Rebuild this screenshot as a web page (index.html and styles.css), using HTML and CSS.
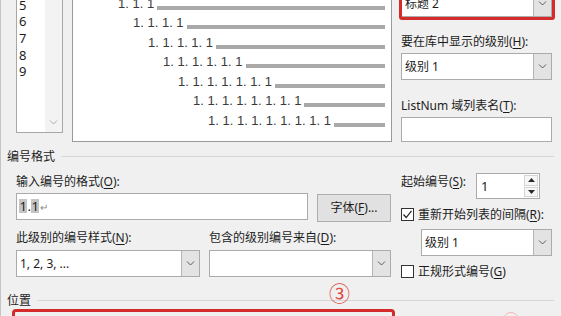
FILE: index.html
```html
<!DOCTYPE html>
<html lang="zh-CN">
<head>
    <meta charset="UTF-8">
    <meta name="viewport" content="width=device-width, initial-scale=1.0">
    <title>定义新多级列表</title>
    <link rel="stylesheet" href="styles.css">
</head>
<body>
    <div class="dialog">
        <div class="top">
            <div class="levels">
                <ul class="level-list">
                    <li>1</li>
                    <li>2</li>
                    <li>3</li>
                    <li>4</li>
                    <li>5</li>
                    <li>6</li>
                    <li>7</li>
                    <li>8</li>
                    <li>9</li>
                </ul>
                <div class="vscroll">
                    <svg class="chev light" width="9" height="5" viewBox="0 0 9 5"><polyline points="1,0.5 4.5,4 8,0.5"/></svg>
                </div>
            </div>

            <div class="preview">
                <div class="pv-row lv1"><span>1</span><i></i></div>
                <div class="pv-row lv2"><span>1. 1</span><i></i></div>
                <div class="pv-row lv3"><span>1. 1. 1</span><i></i></div>
                <div class="pv-row lv4"><span>1. 1. 1. 1</span><i></i></div>
                <div class="pv-row lv5"><span>1. 1. 1. 1. 1</span><i></i></div>
                <div class="pv-row lv6"><span>1. 1. 1. 1. 1. 1</span><i></i></div>
                <div class="pv-row lv7"><span>1. 1. 1. 1. 1. 1. 1</span><i></i></div>
                <div class="pv-row lv8"><span>1. 1. 1. 1. 1. 1. 1. 1</span><i></i></div>
                <div class="pv-row lv9"><span>1. 1. 1. 1. 1. 1. 1. 1. 1</span><i></i></div>
            </div>

            <div class="side">
                <div class="combo marked">
                    <span class="combo-text">标题 2</span>
                    <span class="drop"><svg class="chev" width="9" height="5" viewBox="0 0 9 5"><polyline points="1,0.5 4.5,4 8,0.5"/></svg></span>
                </div>
                <div class="label gap-lg">要在库中显示的级别(<u>H</u>):</div>
                <div class="combo gap-sm">
                    <span class="combo-text">级别 1</span>
                    <span class="drop"><svg class="chev" width="9" height="5" viewBox="0 0 9 5"><polyline points="1,0.5 4.5,4 8,0.5"/></svg></span>
                </div>
                <div class="label gap-lg2">ListNum 域列表名(<u>T</u>):</div>
                <div class="textbox list-name gap-sm"></div>
            </div>
        </div>

        <div class="group format-group">
            <div class="group-title">编号格式</div>
            <div class="group-body">
                <div class="format-left">
                    <div class="label first-label">输入编号的格式(<u>O</u>):</div>
                    <div class="format-row">
                        <div class="textbox format-input"><span class="field">1</span>.<span class="field">1</span><span class="para">↵</span></div>
                        <div class="btn">字体(<u>F</u>)...</div>
                    </div>
                    <div class="pair">
                        <div class="label">此级别的编号样式(<u>N</u>):</div>
                        <div class="label">包含的级别编号来自(<u>D</u>):</div>
                        <div class="combo">
                            <span class="combo-text">1, 2, 3, ...</span>
                            <span class="drop"><svg class="chev" width="9" height="5" viewBox="0 0 9 5"><polyline points="1,0.5 4.5,4 8,0.5"/></svg></span>
                        </div>
                        <div class="combo">
                            <span class="combo-text"></span>
                            <span class="drop"><svg class="chev" width="9" height="5" viewBox="0 0 9 5"><polyline points="1,0.5 4.5,4 8,0.5"/></svg></span>
                        </div>
                    </div>
                </div>

                <div class="format-right">
                    <div class="spin-row">
                        <span class="label">起始编号(<u>S</u>):</span>
                        <div class="spinbox">
                            <span class="spin-value">1</span>
                            <div class="spin-buttons">
                                <span class="spin-btn"><svg width="7" height="4" viewBox="0 0 7 4"><polygon points="0,4 3.5,0 7,4"/></svg></span>
                                <span class="spin-btn"><svg width="7" height="4" viewBox="0 0 7 4"><polygon points="0,0 3.5,4 7,0"/></svg></span>
                            </div>
                        </div>
                    </div>
                    <label class="check-row">
                        <span class="checkbox checked"><svg width="11" height="11" viewBox="0 0 11 11"><polyline points="1.5,5.5 4.2,8.5 9.5,1.8"/></svg></span>
                        重新开始列表的间隔(<u>R</u>):
                    </label>
                    <div class="combo restart-combo">
                        <span class="combo-text">级别 1</span>
                        <span class="drop"><svg class="chev" width="9" height="5" viewBox="0 0 9 5"><polyline points="1,0.5 4.5,4 8,0.5"/></svg></span>
                    </div>
                    <label class="check-row">
                        <span class="checkbox"></span>
                        正规形式编号(<u>G</u>)
                    </label>
                </div>
            </div>
        </div>

        <div class="group position-group">
            <div class="group-title">位置</div>
            <div class="marked-area"></div>
        </div>

        <span class="callout">③</span>
        <span class="callout-next"></span>
    </div>
</body>
</html>
```

FILE: styles.css
```css
/* dialog */
body {
    margin: 0;
    background-color: #f0f0f0;
    font-family: "Noto Sans", "Noto Sans CJK SC", sans-serif;
    font-size: 12px;
    color: #1c1c1c;
}

.dialog {
    position: relative;
    width: 561px;
    height: 316px;
    overflow: hidden;
    box-sizing: border-box;
    border-left: 1px solid #c4c4c4;
}

u {
    text-decoration-thickness: 1px;
    text-underline-offset: 2px;
}

.label {
    line-height: 16px;
    white-space: nowrap;
}

/* top part: levels, preview, link settings */
.top {
    display: flex;
    align-items: flex-start;
    margin-top: -80px;
}

.levels {
    display: flex;
    margin-left: 15px;
    margin-top: 9px;
    width: 47px;
    height: 204px;
    box-sizing: border-box;
    border: 1px solid #a8a8a8;
    background-color: #fff;
}

.level-list {
    flex: 1;
    list-style: none;
    margin: 0;
    padding: 0 0 0 2px;
    font-size: 13px;
    line-height: 16.67px;
}

.vscroll {
    width: 17px;
    background-color: #f3f3f3;
    display: flex;
    align-items: flex-end;
    justify-content: center;
    padding-bottom: 7px;
    box-sizing: border-box;
}

.chev {
    display: block;
}

.chev polyline {
    fill: none;
    stroke: #5a5a5a;
    stroke-width: 1;
}

.chev.light polyline {
    stroke: #a8a8a8;
}

.preview {
    margin-left: 9px;
    margin-top: 28px;
    width: 320px;
    height: 194px;
    box-sizing: border-box;
    border: 1px solid #9a9a9a;
    background-color: #fff;
    padding: 5.65px 6px 0 0;
}

.pv-row {
    display: flex;
    align-items: center;
    height: 19.5px;
    font-family: "Liberation Sans", Arial, sans-serif;
    font-size: 13px;
    color: #3a3a3a;
    white-space: pre;
}

.pv-row i {
    flex: 1;
    height: 4px;
    margin: 9px 0 0 3px;
    background-color: #a9a9a9;
}

.lv1 { padding-left: 15px; }
.lv2 { padding-left: 30px; }
.lv3 { padding-left: 45px; }
.lv4 { padding-left: 60px; }
.lv5 { padding-left: 75px; }
.lv6 { padding-left: 90px; }
.lv7 { padding-left: 105px; }
.lv8 { padding-left: 120px; }
.lv9 { padding-left: 135px; }

.side {
    margin-left: 9px;
    padding-top: 70px;
    width: 151px;
}

.gap-lg { margin-top: 17px; }
.gap-lg2 { margin-top: 18px; }
.gap-sm { margin-top: 3px; }

/* controls */
.combo {
    position: relative;
    display: flex;
    height: 27px;
    box-sizing: border-box;
    border: 1px solid #ababab;
    background-color: #fff;
}

.combo-text {
    flex: 1;
    padding-left: 3px;
    line-height: 25px;
    white-space: nowrap;
}

.drop {
    width: 17px;
    background-color: #e3e3e3;
    border-left: 1px solid #b4b4b4;
    display: flex;
    align-items: center;
    justify-content: center;
}

.marked::after {
    content: "";
    position: absolute;
    top: -4px;
    left: -3px;
    right: -4px;
    bottom: -4px;
    border: 3px solid #d42b2b;
    border-radius: 3px;
}

.textbox {
    box-sizing: border-box;
    border: 1px solid #ababab;
    background-color: #fff;
}

.list-name {
    height: 25px;
}

/* 编号格式 */
.group-title {
    display: flex;
    align-items: center;
    margin-left: 6px;
    line-height: 16px;
}

.group-title::after {
    content: "";
    flex: 1;
    margin: -1px 7px 0 6px;
    border-top: 1px solid #d6d6d6;
}

.format-group {
    margin-top: 7px;
}

.group-body {
    display: flex;
    padding-left: 15px;
}

.format-left {
    width: 375px;
}

.first-label {
    margin-top: 9px;
}

.format-row {
    display: flex;
    align-items: flex-start;
    margin-top: 3px;
}

.format-input {
    width: 292px;
    height: 27px;
    padding: 5px 0 0 2px;
    font-size: 13px;
    line-height: 14px;
}

.field {
    display: inline-block;
    background-color: #c4c4c4;
    padding: 0 0.5px;
}

.para {
    font-size: 10px;
    color: #8a8a8a;
    margin-left: 1px;
}

.btn {
    margin: 1px 0 0 9px;
    width: 74px;
    height: 28px;
    box-sizing: border-box;
    border: 1px solid #adadad;
    background-color: #e1e1e1;
    text-align: center;
    line-height: 26px;
}

.pair {
    display: grid;
    grid-template-columns: 184px 182px;
    column-gap: 9px;
    row-gap: 4px;
    margin-top: 8px;
}

.format-right {
    margin-left: 10px;
    width: 152px;
}

.spin-row {
    display: flex;
    align-items: flex-start;
    margin-top: 8px;
}

.spin-row .label {
    margin-top: 1px;
}

.spinbox {
    display: flex;
    margin-left: auto;
    margin-right: 13px;
    width: 64px;
    height: 26px;
    box-sizing: border-box;
    border: 1px solid #ababab;
    background-color: #fff;
}

.spin-value {
    flex: 1;
    padding-left: 4px;
    line-height: 24px;
    font-size: 13px;
}

.spin-buttons {
    display: flex;
    flex-direction: column;
    gap: 1px;
    margin: 1px 1px 1px 0;
    width: 14px;
}

.spin-btn {
    flex: 1;
    box-sizing: border-box;
    border: 1px solid #d4d4d4;
    background-color: #f7f7f7;
    display: flex;
    align-items: center;
    justify-content: center;
}

.spin-btn svg {
    display: block;
    fill: #2a2a2a;
}

.check-row {
    display: flex;
    align-items: center;
    height: 16px;
    margin-top: 7px;
    white-space: nowrap;
}

.checkbox {
    width: 13px;
    height: 13px;
    box-sizing: border-box;
    border: 1px solid #333;
    background-color: #fff;
    margin-right: 4px;
    display: flex;
    align-items: center;
    justify-content: center;
}

.checkbox svg polyline {
    fill: none;
    stroke: #222;
    stroke-width: 1.2;
}

.restart-combo {
    margin: 7px 0 0 20px;
    width: 131px;
}

/* 位置 */
.position-group {
    margin-top: 14px;
}

.marked-area {
    margin: 0 0 0 11px;
    width: 383px;
    height: 40px;
    box-sizing: border-box;
    border: 3px solid #d42b2b;
    border-radius: 4px;
}

.callout {
    position: absolute;
    left: 328px;
    top: 282px;
    font-family: "Noto Sans CJK SC", sans-serif;
    font-size: 21px;
    line-height: 21px;
    color: #e04a3f;
}

.callout-next {
    position: absolute;
    left: 502px;
    top: 312px;
    width: 14px;
    height: 14px;
    border: 1.5px solid #f3b5b5;
    border-radius: 50%;
}
```
